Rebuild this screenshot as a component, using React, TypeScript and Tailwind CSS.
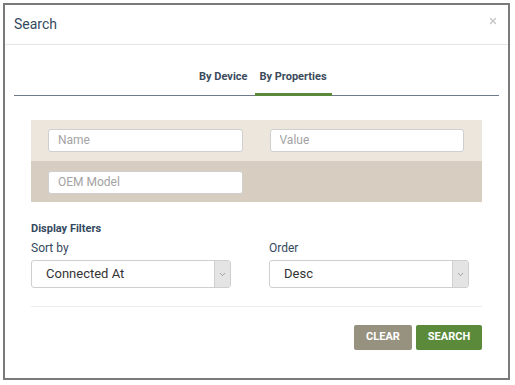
import { ChevronDown, X } from "lucide-react"

function Field({ placeholder }: { placeholder: string }) {
  return (
    <input
      placeholder={placeholder}
      className="h-[23px] w-full rounded-[3px] border border-[#cfcfcf] bg-white px-[9px] text-[12px] text-[#333] placeholder:text-[#a3a3a3] outline-none"
    />
  )
}

function SelectBox({ value }: { value: string }) {
  return (
    <div className="flex h-[28px] w-[200px] items-stretch overflow-hidden rounded-[3px] border border-[#cfcfcf] bg-white">
      <div className="flex flex-1 items-center pl-[14px] text-[13px] text-[#333]">{value}</div>
      <div className="flex w-[16px] items-center justify-center border-l border-[#cfcfcf] bg-[#e4e4e4]">
        <ChevronDown className="h-[9px] w-[9px] text-[#888]" strokeWidth={2} />
      </div>
    </div>
  )
}

export default function App() {
  return (
    <div className="h-[385px] w-[515px] bg-white p-[3px] font-['Roboto',sans-serif]">
      <div className="flex h-[377px] w-[507px] flex-col border-2 border-[#7a7a7a] bg-white">
        {/* Header */}
        <div className="flex h-[40px] items-center justify-between border-b border-[#e6e6e6] pl-[9px] pr-[10px]">
          <h1 className="text-[14px] text-[#34495e]">Search</h1>
          <X className="-mt-[8px] h-[10px] w-[10px] text-[#c4c4c4]" strokeWidth={3} />
        </div>

        {/* Tabs */}
        <div className="mx-[9px] mt-[24px] flex gap-[4px] border-b border-[#6d7b88] pl-[181px] text-[11px] font-bold text-[#3b4b5b]">
          <div className="px-[4px] pb-[9px]">By Device</div>
          <div className="-mb-px border-b-[3px] border-[#5b8a3a] pl-[4px] pr-[5px] pb-[7px]">By Properties</div>
        </div>

        <div className="mx-[26px] mt-[24px]">
          {/* Filter panel */}
          <div className="grid grid-cols-2 gap-x-[27px] bg-[#ede6dc] px-[17px] pt-[9px] pb-[9px] pr-[18px]">
            <Field placeholder="Name" />
            <Field placeholder="Value" />
          </div>
          <div className="grid grid-cols-2 gap-x-[27px] bg-[#d7cec1] px-[17px] pt-[10px] pb-[8px] pr-[18px]">
            <Field placeholder="OEM Model" />
          </div>

          {/* Display filters */}
          <div className="mt-[19px] text-[11px] font-bold text-[#34495e]">Display Filters</div>
          <div className="mt-[2px] grid grid-cols-[200px_200px] gap-x-[38px]">
            <div>
              <div className="text-[12px] text-[#34495e]">Sort by</div>
              <div className="mt-[3px]">
                <SelectBox value="Connected At" />
              </div>
            </div>
            <div>
              <div className="text-[12px] text-[#34495e]">Order</div>
              <div className="mt-[3px]">
                <SelectBox value="Desc" />
              </div>
            </div>
          </div>

          <div className="mt-[18px] border-t border-[#ececec]" />

          <div className="mt-[18px] flex justify-end gap-[4px]">
            <button className="h-[25px] w-[58px] rounded-[2px] bg-[#979280] text-[11px] font-bold text-white">
              CLEAR
            </button>
            <button className="h-[25px] w-[66px] rounded-[2px] bg-[#5b8b3a] text-[11px] font-bold text-white">
              SEARCH
            </button>
          </div>
        </div>
      </div>
    </div>
  )
}
